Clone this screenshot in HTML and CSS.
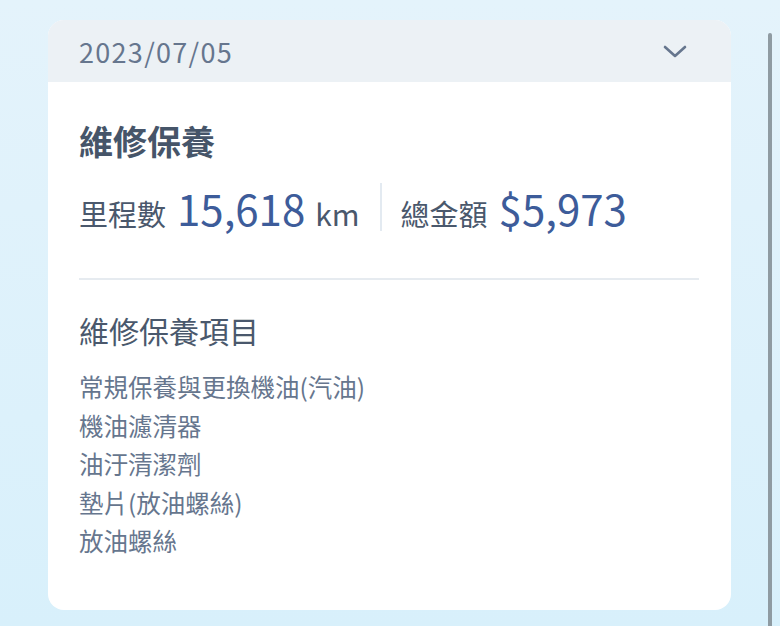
FILE: index.html
```html
<!DOCTYPE html>
<html lang="zh-Hant">
<head>
    <meta charset="UTF-8">
    <meta name="viewport" content="width=device-width, initial-scale=1.0">
    <title>保養紀錄</title>
    <link rel="stylesheet" href="styles.css">
</head>
<body>
<div class="record-card">
    <div class="record-header">
        <span class="record-date">2023/07/05</span>
        <svg class="chevron" width="24" height="14" viewBox="0 0 24 14">
            <polyline points="2,2 12,11 22,2" fill="none" stroke="#66768e" stroke-width="2.6" stroke-linecap="round" stroke-linejoin="round"/>
        </svg>
    </div>
    <div class="record-body">
        <h2 class="record-title">維修保養</h2>
        <div class="stats">
            <div class="stat">
                <span class="stat-label">里程數</span>
                <span class="stat-value">15,618</span>
                <span class="stat-unit">km</span>
            </div>
            <div class="stat-divider"></div>
            <div class="stat">
                <span class="stat-label">總金額</span>
                <span class="stat-value">$5,973</span>
            </div>
        </div>
        <hr class="divider">
        <h3 class="items-title">維修保養項目</h3>
        <ul class="items">
            <li>常規保養與更換機油(汽油)</li>
            <li>機油濾清器</li>
            <li>油汙清潔劑</li>
            <li>墊片(放油螺絲)</li>
            <li>放油螺絲</li>
        </ul>
    </div>
</div>
<div class="scroll-indicator"></div>
</body>
</html>
```

FILE: styles.css
```css
/* Page */
body {
    margin: 0;
    min-height: 626px;
    background: linear-gradient(180deg, #e4f3fb 0%, #d8f0fb 100%);
    font-family: "Noto Sans CJK TC", "Noto Sans", sans-serif;
    overflow: hidden;
}

/* Card */
.record-card {
    width: 683px;
    margin: 20px 0 0 48px;
    background-color: #ffffff;
    border-radius: 16px;
    overflow: hidden;
}

.record-header {
    height: 62px;
    padding: 0 44px 0 31px;
    background-color: #ecf1f5;
    display: flex;
    justify-content: space-between;
    align-items: center;
}

.record-date {
    font-size: 27px;
    letter-spacing: 1.3px;
    color: #66768e;
    line-height: 1;
}

.chevron {
    display: block;
    margin-top: 1px;
}

.record-body {
    padding: 35px 32px 49px 31px;
}

.record-title {
    margin: 0;
    font-size: 34px;
    line-height: 48px;
    font-weight: 700;
    color: #465569;
}

/* Stats row */
.stats {
    display: flex;
    align-items: center;
    margin-top: 14px;
    height: 56px;
}

.stat {
    display: flex;
    align-items: baseline;
    gap: 11px;
}

.stat-label {
    font-size: 29px;
    color: #4a586c;
}

.stat-value {
    font-size: 42px;
    color: #3d5c9a;
}

.stat-unit {
    font-size: 30px;
    color: #4a586c;
    margin-left: -1px;
}

.stat-divider {
    width: 2px;
    height: 48px;
    background-color: #e3eaf1;
    margin: 0 19px 0 20px;
}

/* Items */
.divider {
    margin: 43px 0 0 0;
    border: none;
    height: 2px;
    background-color: #e6ebf0;
}

.items-title {
    margin: 29px 0 0 0;
    font-size: 30px;
    line-height: 42px;
    font-weight: 400;
    color: #4a586c;
}

.items {
    list-style: none;
    margin: 17px 0 0 0;
    padding: 0;
}

.items li {
    font-size: 24.5px;
    line-height: 38.5px;
    color: #66768e;
}

/* Fake scroll bar on the right */
.scroll-indicator {
    position: fixed;
    top: 33px;
    right: 8px;
    width: 4px;
    height: 600px;
    border-radius: 2px;
    background-color: #8f9ba2;
}
```
